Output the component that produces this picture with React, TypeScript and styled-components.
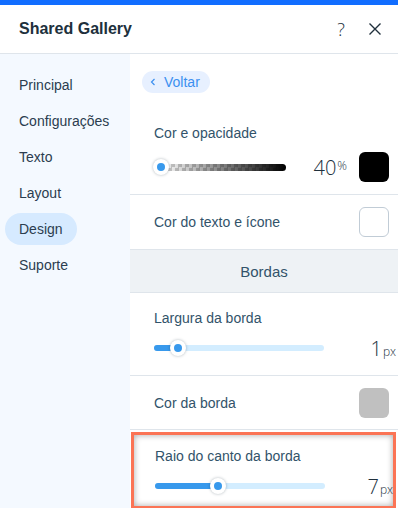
import React from "react";
import styled, { createGlobalStyle } from "styled-components";

const GlobalStyle = createGlobalStyle`
  html, body {
    margin: 0;
    padding: 0;
    background: #fff;
  }
  body {
    font-family: "Liberation Sans", Arial, sans-serif;
    -webkit-font-smoothing: antialiased;
  }
`;

const Panel = styled.div`
  width: 398px;
  height: 508px;
  overflow: hidden;
  display: flex;
  flex-direction: column;
  background: #fff;
`;

const TopBar = styled.div`
  height: 5px;
  flex: none;
  background: #116dff;
`;

const Header = styled.div`
  height: 48px;
  flex: none;
  display: flex;
  align-items: center;
  padding: 0 11px 0 19px;
  border-bottom: 1px solid #dfe5eb;
`;

const Title = styled.div`
  flex: 1;
  font-size: 16px;
  font-weight: bold;
  color: #20303c;
`;

const HeaderButton = styled.button`
  width: 24px;
  height: 24px;
  margin-left: 10px;
  padding: 0;
  border: none;
  background: none;
  display: flex;
  align-items: center;
  justify-content: center;
  color: #20303c;
  font-family: "Open Sans", "Liberation Sans", sans-serif;
  font-weight: 300;
  font-size: 18px;
`;

const Body = styled.div`
  flex: 1;
  display: flex;
  min-height: 0;
`;

const Sidebar = styled.nav`
  width: 130px;
  flex: none;
  background: #f4f9ff;
  padding-top: 15px;
  display: flex;
  flex-direction: column;
  align-items: flex-start;
  gap: 4px;
`;

const NavItem = styled.div<{ active?: boolean }>`
  height: 32px;
  margin-left: 5px;
  padding: 0 14px;
  border-radius: 16px;
  display: flex;
  align-items: center;
  font-size: 14px;
  color: #2b3d4f;
  background: ${({ active }) => (active ? "#d6eaff" : "transparent")};
`;

const Content = styled.div`
  flex: 1;
  display: flex;
  flex-direction: column;
  min-width: 0;
`;

const BackRow = styled.div`
  height: 55px;
  flex: none;
  padding: 17px 12px 0;
  box-sizing: border-box;
`;

const BackButton = styled.div`
  display: inline-flex;
  align-items: center;
  gap: 8px;
  height: 22px;
  padding: 0 10px 0 8px;
  border-radius: 11px;
  background: #e7f0ff;
  color: #3b8ff0;
  font-size: 14px;
`;

const Section = styled.div<{ top: number; bottom: number }>`
  flex: none;
  padding: ${({ top, bottom }) => `${top}px 2px ${bottom}px 24px`};
  border-bottom: 1px solid #dfe5eb;
`;

const Label = styled.div`
  font-size: 14px;
  line-height: 18px;
  color: #32536a;
`;

const SliderRow = styled.div<{ gap: number }>`
  display: flex;
  align-items: center;
  height: 30px;
  margin-top: ${({ gap }) => gap}px;
`;

const ColorRow = styled.div<{ height: number }>`
  flex: none;
  height: ${({ height }) => height}px;
  display: flex;
  align-items: center;
  justify-content: space-between;
  padding: 0 9px 0 24px;
  border-bottom: 1px solid #dfe5eb;
`;

const Swatch = styled.div<{ color: string; outline?: boolean }>`
  width: 28px;
  height: 28px;
  border-radius: 6px;
  background: ${({ color }) => color};
  border: 1px solid ${({ outline }) => (outline ? "#c1ccd6" : "transparent")};
`;

const SectionTitle = styled.div`
  flex: none;
  height: 42px;
  display: flex;
  align-items: center;
  justify-content: center;
  background: #eef2f5;
  border-bottom: 1px solid #dfe5eb;
  font-size: 15px;
  color: #32536a;
`;

const Highlight = styled.div`
  flex: none;
  margin: 2px 2px 0 1px;
  height: 77px;
  box-sizing: border-box;
  border: 3px solid #fb7455;
  box-shadow: inset 0 0 6px rgba(0, 0, 0, 0.35);
  padding: 12px 0 0 21px;
`;

const Track = styled.div<{ width: number }>`
  position: relative;
  width: ${({ width }) => width}px;
  height: 6px;
  border-radius: 3px;
  background: #d3edff;
  flex: none;
`;

const Fill = styled.div`
  height: 100%;
  border-radius: 3px;
  background: #3899ec;
`;

const AlphaTrack = styled.div`
  position: relative;
  width: 125px;
  height: 7px;
  margin-left: 7px;
  flex: none;
  border-radius: 0 4px 4px 0;
  background: linear-gradient(to right, rgba(0, 0, 0, 0), #000),
    repeating-conic-gradient(#cfcfcf 0 25%, #ffffff 0 50%) 0 0 / 7px 7px;
`;

const Thumb = styled.div`
  position: absolute;
  top: 50%;
  width: 16px;
  height: 16px;
  margin: -8px 0 0 -8px;
  border-radius: 50%;
  background: #fff;
  box-shadow: 0 0 3px rgba(22, 45, 61, 0.35);
  display: flex;
  align-items: center;
  justify-content: center;

  &::after {
    content: "";
    width: 8px;
    height: 8px;
    border-radius: 50%;
    background: #3899ec;
  }
`;

const Value = styled.div`
  margin-left: auto;
  display: flex;
  align-items: baseline;
  color: #20303c;
  font-family: "Open Sans", "Liberation Sans", sans-serif;
  font-weight: 300;
`;

const Number = styled.span`
  font-size: 20px;
`;

const Unit = styled.span<{ raised?: boolean }>`
  font-size: 12px;
  margin-left: 1px;
  position: relative;
  top: ${({ raised }) => (raised ? "-5px" : "0")};
`;

const CloseIcon = () => (
  <svg width="14" height="14" viewBox="0 0 14 14">
    <path d="M1.5 1.5l11 11M12.5 1.5l-11 11" stroke="#20303c" strokeWidth="1.4" />
  </svg>
);

const ChevronLeft = () => (
  <svg width="6" height="8" viewBox="0 0 6 8">
    <path d="M4.5 1L1.5 4l3 3" fill="none" stroke="#3b8ff0" strokeWidth="1.2" />
  </svg>
);

const Slider = ({ value, max, width }: { value: number; max: number; width: number }) => {
  const pct = (value / max) * 100;
  return (
    <Track width={width}>
      <Fill style={{ width: `${pct}%` }} />
      <Thumb style={{ left: `${pct}%` }} />
    </Track>
  );
};

const nav = ["Principal", "Configurações", "Texto", "Layout", "Design", "Suporte"];

export default function App() {
  return (
    <Panel>
      <GlobalStyle />
      <TopBar />
      <Header>
        <Title>Shared Gallery</Title>
        <HeaderButton>?</HeaderButton>
        <HeaderButton>
          <CloseIcon />
        </HeaderButton>
      </Header>
      <Body>
        <Sidebar>
          {nav.map((item) => (
            <NavItem key={item} active={item === "Design"}>
              {item}
            </NavItem>
          ))}
        </Sidebar>
        <Content>
          <BackRow>
            <BackButton>
              <ChevronLeft />
              Voltar
            </BackButton>
          </BackRow>
          <Section top={15} bottom={12}>
            <Label>Cor e opacidade</Label>
            <SliderRow gap={10}>
              <AlphaTrack>
                <Thumb style={{ left: "0%" }} />
              </AlphaTrack>
              <Value>
                <Number>40</Number>
                <Unit raised>%</Unit>
              </Value>
              <Swatch color="#000" style={{ marginLeft: 12, marginRight: 7 }} />
            </SliderRow>
          </Section>
          <ColorRow height={54}>
            <Label>Cor do texto e ícone</Label>
            <Swatch color="#fff" outline />
          </ColorRow>
          <SectionTitle>Bordas</SectionTitle>
          <Section top={16} bottom={12}>
            <Label>Largura da borda</Label>
            <SliderRow gap={6}>
              <Slider value={1} max={7} width={170} />
              <Value>
                <Number>1</Number>
                <Unit>px</Unit>
              </Value>
            </SliderRow>
          </Section>
          <ColorRow height={53}>
            <Label>Cor da borda</Label>
            <Swatch color="#c0c0c0" />
          </ColorRow>
          <Highlight>
            <Label>Raio do canto da borda</Label>
            <SliderRow gap={6}>
              <Slider value={7} max={19} width={170} />
              <Value>
                <Number>7</Number>
                <Unit>px</Unit>
              </Value>
            </SliderRow>
          </Highlight>
        </Content>
      </Body>
    </Panel>
  );
}
